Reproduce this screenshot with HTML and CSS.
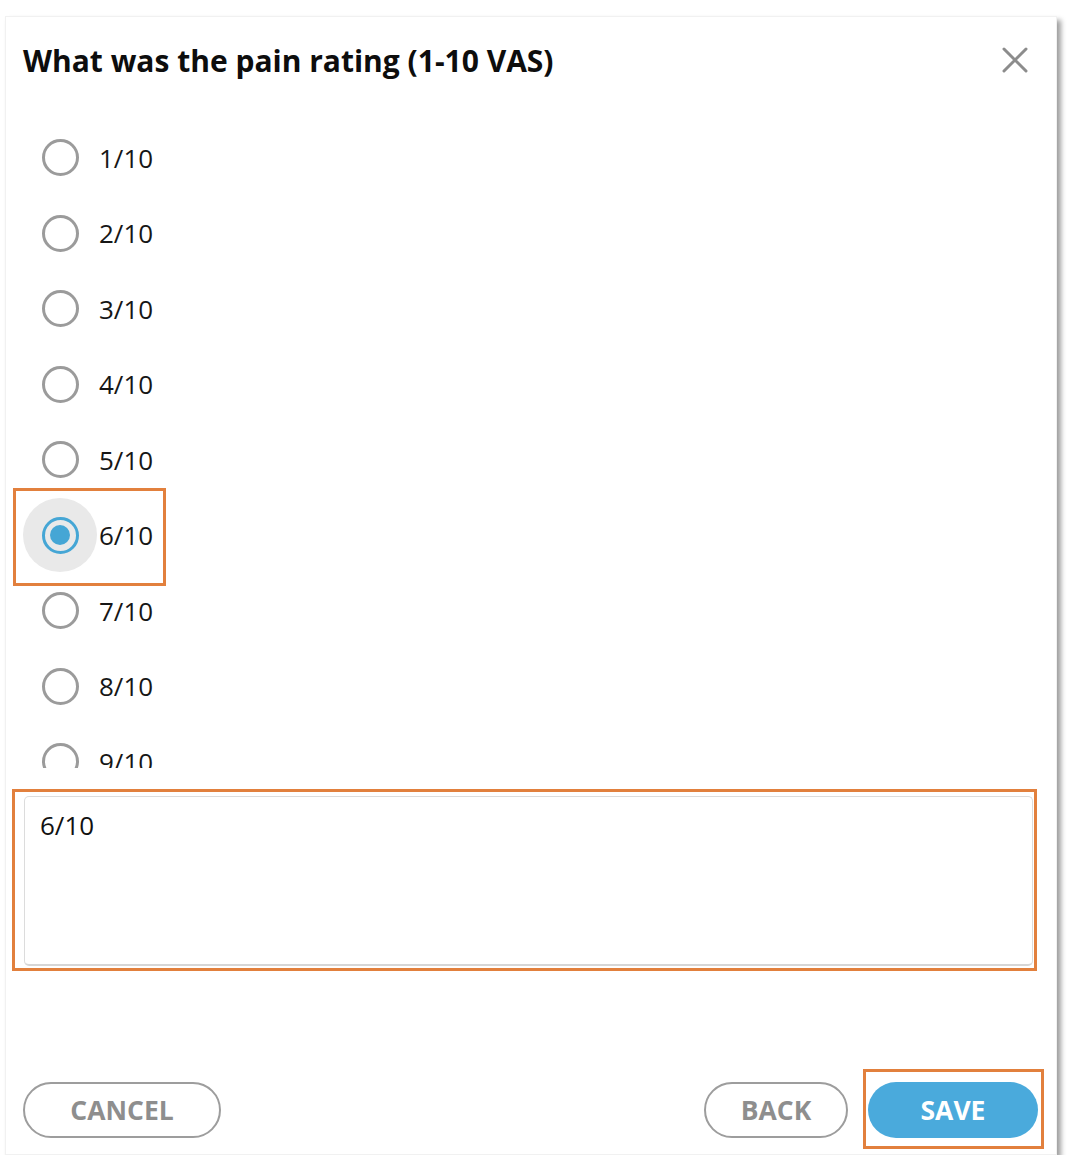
FILE: index.html
```html
<!DOCTYPE html>
<html>
<head>
<meta charset="utf-8">
<link rel="stylesheet" href="styles.css">
</head>
<body>
<div class="dialog">
  <div class="header">
    <h1 class="title">What was the pain rating (1-10 VAS)</h1>
    <button class="close" aria-label="Close">
      <svg width="26" height="26" viewBox="0 0 26 26"><path d="M2 2 L24 24 M24 2 L2 24" stroke="#8c8c8c" stroke-width="3" stroke-linecap="round"/></svg>
    </button>
  </div>
  <div class="options">
    <label class="option"><span class="halo"><span class="radio"></span></span><span class="label">1/10</span></label>
    <label class="option"><span class="halo"><span class="radio"></span></span><span class="label">2/10</span></label>
    <label class="option"><span class="halo"><span class="radio"></span></span><span class="label">3/10</span></label>
    <label class="option"><span class="halo"><span class="radio"></span></span><span class="label">4/10</span></label>
    <label class="option"><span class="halo"><span class="radio"></span></span><span class="label">5/10</span></label>
    <label class="option selected"><span class="halo"><span class="radio"></span></span><span class="label">6/10</span></label>
    <label class="option"><span class="halo"><span class="radio"></span></span><span class="label">7/10</span></label>
    <label class="option"><span class="halo"><span class="radio"></span></span><span class="label">8/10</span></label>
    <label class="option"><span class="halo"><span class="radio"></span></span><span class="label">9/10</span></label>
    <label class="option"><span class="halo"><span class="radio"></span></span><span class="label">10/10</span></label>
  </div>
  <div class="field">
    <div class="answer">6/10</div>
  </div>
  <div class="spacer"></div>
  <div class="actions">
    <button class="btn btn-outline btn-cancel">CANCEL</button>
    <div class="right-actions">
      <button class="btn btn-outline btn-back">BACK</button>
      <button class="btn btn-primary btn-save">SAVE</button>
    </div>
  </div>
  <div class="mark mark-radio"></div>
  <div class="mark mark-text"></div>
  <div class="mark mark-save"></div>
</div>
</body>
</html>
```
FILE: styles.css
```css
* { box-sizing: border-box; }
html, body { margin: 0; padding: 0; background: #ffffff; }
body { font-family: "Open Sans", "Noto Sans", sans-serif; color: #151515; }

.dialog {
  position: relative;
  margin: 16px 0 0 5px;
  width: 1052px;
  height: 1139px;
  background: #fff;
  border: 1px solid #f1f1f1;
  box-shadow: 4px 4px 5px rgba(0,0,0,0.38);
  display: flex;
  flex-direction: column;
}

.header {
  display: flex;
  align-items: flex-start;
  justify-content: space-between;
  padding: 23px 28px 0 17px;
  height: 103px;
}
.title {
  margin: 0;
  font-size: 30px;
  font-weight: 700;
  line-height: 42px;
  color: #0d0d0d;
}
.close {
  border: 0;
  background: none;
  padding: 0;
  margin-top: 7px;
  width: 26px;
  height: 26px;
}

.options {
  height: 648px;
  overflow: hidden;
  padding-left: 17px;
}
.option {
  display: flex;
  align-items: center;
  height: 75.5px;
}
.halo {
  width: 74px;
  height: 74px;
  border-radius: 50%;
  display: flex;
  align-items: center;
  justify-content: center;
}
.radio {
  width: 37px;
  height: 37px;
  border-radius: 50%;
  border: 3px solid #9b9b9b;
  position: relative;
}
.label {
  margin-left: 2px;
  font-size: 26px;
  line-height: 34px;
  color: #161616;
}
.selected .halo { background: #e9e9e9; }
.selected .radio { border-color: #45a6d5; }
.selected .radio::after {
  content: "";
  position: absolute;
  left: 5.5px; top: 5.5px;
  width: 20px; height: 20px;
  border-radius: 50%;
  background: #45a6d5;
}

.field {
  padding: 28px 23px 0 18px;
}
.answer {
  width: 100%;
  height: 170px;
  border: 1px solid #dcdcdc;
  border-bottom: 2px solid #d6d6d6;
  border-radius: 5px;
  padding: 11px 15px;
  font-size: 26px;
  line-height: 34px;
  color: #111;
  background: #fff;
}

.spacer { flex: 1; }

.actions {
  display: flex;
  justify-content: space-between;
  align-items: center;
  padding: 0 18px 16px 17px;
}
.right-actions { display: flex; gap: 20px; }
.btn {
  height: 56px;
  border-radius: 28px;
  font-family: "Open Sans", "Noto Sans", sans-serif;
  font-weight: 700;
  font-size: 26.5px;
  padding: 0;
  cursor: pointer;
}
.btn-outline {
  background: #fff;
  border: 2px solid #9d9d9d;
  color: #8e8e8e;
}
.btn-cancel { width: 198px; }
.btn-back { width: 144px; }
.btn-primary {
  width: 170px;
  border: 0;
  background: #4aaadc;
  color: #fff;
}

.mark {
  position: absolute;
  border: 3px solid #e2803d;
  pointer-events: none;
}
.mark-radio { left: 7px; top: 471px; width: 153px; height: 98px; }
.mark-text { left: 6px; top: 772px; width: 1025px; height: 182px; }
.mark-save { left: 857px; top: 1052px; width: 181px; height: 80px; }
```
